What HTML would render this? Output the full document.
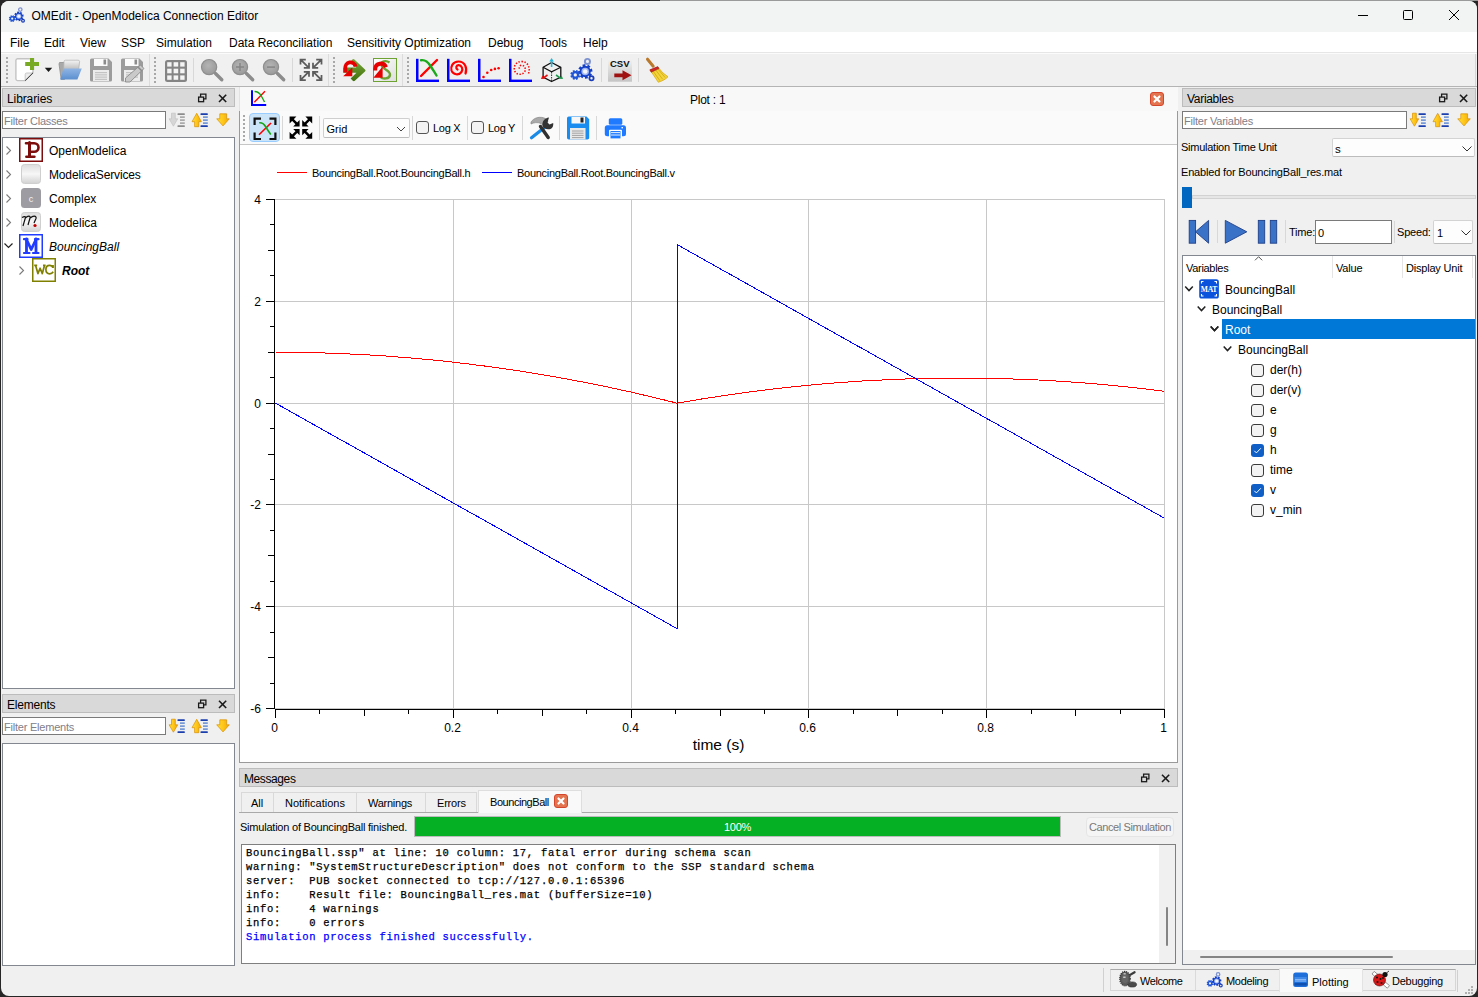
<!DOCTYPE html>
<html><head><meta charset="utf-8">
<style>
html,body{margin:0;padding:0;width:1478px;height:997px;overflow:hidden;background:#262626;}
body{position:relative;font-family:"Liberation Sans",sans-serif;color:#000;}
.a{position:absolute;}
.t{position:absolute;white-space:nowrap;line-height:1;}
#win{position:absolute;left:1px;top:1px;width:1476px;height:995px;background:#f0f0f0;border-radius:8px;}
svg.i{position:absolute;overflow:visible;}
.dockt{position:absolute;background:#d9d9d9;border:1px solid #bcbcbc;box-sizing:border-box;}
.inp{position:absolute;background:#fff;border:1px solid #7a7a7a;box-sizing:border-box;}
.box{position:absolute;background:#fff;border:1px solid #828790;box-sizing:border-box;}
.vs{position:absolute;width:1px;background:#d8d8d8;}
.hdl{position:absolute;width:2px;background:repeating-linear-gradient(to bottom,#a8a8a8 0 2px,transparent 2px 4px);}
.ph{color:#80808a;}
.cb{position:absolute;width:13px;height:13px;box-sizing:border-box;border:1px solid #3a3a3a;border-radius:3px;background:#f3f3f3;}
.cbk{position:absolute;width:13px;height:13px;box-sizing:border-box;border-radius:3px;background:#0f5fc6;}
.mono{font-family:"Liberation Mono",monospace;font-size:10.5px;letter-spacing:0.72px;white-space:pre;-webkit-text-stroke:0.25px;}
</style></head>
<body>
<div class="a" style="left:660px;top:0;width:818px;height:1px;background:#9a9a9a;"></div>
<div id="win"></div>
<svg width="0" height="0" style="position:absolute"><defs><linearGradient id="ggold" x1="0" y1="0" x2="1" y2="0"><stop offset="0" stop-color="#ffe23a"/><stop offset="0.5" stop-color="#ffc61a"/><stop offset="1" stop-color="#f2a900"/></linearGradient></defs></svg>
<!-- ============ TITLE BAR ============ -->
<div class="a" style="left:1px;top:1px;width:1476px;height:31px;background:#f2f3f3;border-radius:8px 8px 0 0;"></div>
<svg class="i" style="left:0;top:0" width="40" height="32">
<path d="M22.43 17.04 L22.26 17.60 L23.36 18.10 L22.18 19.84 L21.25 19.07 L20.84 19.38 L20.33 19.67 L20.75 20.80 L18.69 21.20 L18.57 19.99 L18.06 19.93 L17.50 19.76 L17.00 20.86 L15.26 19.68 L16.03 18.75 L15.72 18.34 L15.43 17.83 L14.30 18.25 L13.90 16.19 L15.11 16.07 L15.17 15.56 L15.34 15.00 L14.24 14.50 L15.42 12.76 L16.35 13.53 L16.76 13.22 L17.27 12.93 L16.85 11.80 L18.91 11.40 L19.03 12.61 L19.54 12.67 L20.10 12.84 L20.60 11.74 L22.34 12.92 L21.57 13.85 L21.88 14.26 L22.17 14.77 L23.30 14.35 L23.70 16.41 L22.49 16.53Z" fill="#1440c8"/>
<circle cx="18.80" cy="16.30" r="2.50" fill="#9fb6f0"/>
<circle cx="18.80" cy="16.30" r="1.50" fill="#f4f6fb"/>
<path d="M14.80 18.60 L14.77 19.01 L15.55 19.20 L14.99 20.54 L14.27 20.17 L14.04 20.44 L13.72 20.71 L14.14 21.39 L12.80 21.95 L12.56 21.18 L12.20 21.20 L11.79 21.17 L11.60 21.95 L10.26 21.39 L10.63 20.67 L10.36 20.44 L10.09 20.12 L9.41 20.54 L8.85 19.20 L9.62 18.96 L9.60 18.60 L9.63 18.19 L8.85 18.00 L9.41 16.66 L10.13 17.03 L10.36 16.76 L10.68 16.49 L10.26 15.81 L11.60 15.25 L11.84 16.02 L12.20 16.00 L12.61 16.03 L12.80 15.25 L14.14 15.81 L13.77 16.53 L14.04 16.76 L14.31 17.08 L14.99 16.66 L15.55 18.00 L14.78 18.24Z M13.30 18.60 A1.1 1.1 0 1 0 11.10 18.60 A1.1 1.1 0 1 0 13.30 18.60Z" fill="#1f55d6" fill-rule="evenodd"/>
<circle cx="20.30" cy="9.60" r="1.70" fill="none" stroke="#7d92cf" stroke-width="1.30"/>
<circle cx="23.00" cy="20.80" r="1.40" fill="none" stroke="#1c3fb8" stroke-width="1.20"/>
</svg>

<div class="t" style="left:31.5px;top:10px;font-size:12px;">OMEdit - OpenModelica Connection Editor</div>
<svg class="i" style="left:0;top:0" width="1478" height="32">
 <g stroke="#000" stroke-width="1" fill="none">
  <line x1="1358" y1="15.5" x2="1368" y2="15.5"/>
  <rect x="1403.5" y="10.5" width="9" height="9" rx="1"/>
  <line x1="1449" y1="10" x2="1459" y2="20"/><line x1="1459" y1="10" x2="1449" y2="20"/>
 </g>
</svg>
<!-- ============ MENU BAR ============ -->
<div class="a" style="left:1px;top:32px;width:1476px;height:20px;background:#fff;"></div>
<div class="a" style="left:1px;top:52px;width:1476px;height:1px;background:#e6e6e6;"></div>
<div class="a" style="left:1px;top:53px;width:1476px;height:1px;background:#fbfbfb;"></div>
<div class="t" style="left:10px;top:37px;font-size:12px;">File</div>
<div class="t" style="left:44px;top:37px;font-size:12px;">Edit</div>
<div class="t" style="left:80px;top:37px;font-size:12px;">View</div>
<div class="t" style="left:121px;top:37px;font-size:12px;">SSP</div>
<div class="t" style="left:156px;top:37px;font-size:12px;">Simulation</div>
<div class="t" style="left:229px;top:37px;font-size:12px;">Data Reconciliation</div>
<div class="t" style="left:347px;top:37px;font-size:12px;">Sensitivity Optimization</div>
<div class="t" style="left:488px;top:37px;font-size:12px;">Debug</div>
<div class="t" style="left:539px;top:37px;font-size:12px;">Tools</div>
<div class="t" style="left:583px;top:37px;font-size:12px;">Help</div>
<!-- ============ TOOLBAR ============ -->
<div class="a" style="left:1px;top:86px;width:1476px;height:1px;background:#b4b4b4;"></div>
<div class="hdl" style="left:6px;top:57px;height:27px;"></div>
<div class="vs" style="left:149px;top:54px;height:32px;background:#dcdcdc;"></div>
<div class="hdl" style="left:154px;top:57px;height:27px;"></div>
<div class="vs" style="left:193px;top:58px;height:24px;"></div>
<div class="vs" style="left:292px;top:58px;height:24px;"></div>
<div class="vs" style="left:328px;top:54px;height:32px;background:#dcdcdc;"></div>
<div class="hdl" style="left:333px;top:57px;height:27px;"></div>
<div class="vs" style="left:402px;top:54px;height:32px;background:#dcdcdc;"></div>
<div class="vs" style="left:1475px;top:54px;height:32px;background:#d6d6d6;"></div>
<div class="hdl" style="left:407px;top:57px;height:27px;"></div>
<div class="vs" style="left:601px;top:58px;height:24px;"></div>
<div class="vs" style="left:638px;top:58px;height:24px;"></div>
<svg class="i" style="left:0;top:0" width="700" height="90">
<defs>
 <linearGradient id="gfold" x1="0" y1="0" x2="1" y2="1"><stop offset="0" stop-color="#e8e8e8"/><stop offset="1" stop-color="#fafafa"/></linearGradient>
 <linearGradient id="gpaper" x1="0" y1="0" x2="0" y2="1"><stop offset="0" stop-color="#f4f4f4"/><stop offset="1" stop-color="#b9b9b9"/></linearGradient>
 <linearGradient id="gblue" x1="0" y1="0" x2="0" y2="1"><stop offset="0" stop-color="#8fb4e3"/><stop offset="1" stop-color="#5b8fd0"/></linearGradient>
 <radialGradient id="glens" cx="0.45" cy="0.4" r="0.6"><stop offset="0" stop-color="#b4b4b4"/><stop offset="1" stop-color="#9a9a9a"/></radialGradient>
 <linearGradient id="ggreen" x1="0" y1="0" x2="0" y2="1"><stop offset="0" stop-color="#7aa83a"/><stop offset="1" stop-color="#3f6f0c"/></linearGradient>
 <linearGradient id="gcsv" x1="0" y1="0" x2="0" y2="1"><stop offset="0" stop-color="#f2f2f2"/><stop offset="1" stop-color="#c4c4c4"/></linearGradient>
 <linearGradient id="gsset" x1="0" y1="0" x2="1" y2="1"><stop offset="0" stop-color="#ffffff"/><stop offset="1" stop-color="#dedede"/></linearGradient>
</defs>
<!-- New -->
<path d="M17.5 58.7H33V72.8L25.2 80.6H17.5A1.8 1.8 0 0 1 15.9 79V60.3A1.8 1.8 0 0 1 17.5 58.7Z" fill="#fff" stroke="#c3c3c3" stroke-width="1.4"/>
<path d="M25.2 80.6V74.5A1.5 1.5 0 0 1 26.7 73H33Z" fill="url(#gfold)" stroke="#c8c8c8" stroke-width="1"/>
<path d="M25.2 80.6L33 72.8" stroke="#333" stroke-width="1"/>
<path d="M30 58H34.1V62.1H39V65.9H34.1V70H30V65.9H25.2V62.1H30Z" fill="#79aa24"/>
<path d="M44.8 67.8H52.2L48.5 72Z" fill="#1a1a1a"/>
<!-- Open -->
<path d="M59.5 62.5H64.5V79.5H61.2L59 64Z" fill="#a9a9a9" stroke="#8f8f8f" stroke-width="0.8"/>
<path d="M64 61.5A1.5 1.5 0 0 1 65.5 60.2H78.2A1.5 1.5 0 0 1 79.6 61.6L78.6 70H63.6Z" fill="url(#gpaper)" stroke="#b0b0b0" stroke-width="0.7"/>
<path d="M63.4 68.6H81.8L77.4 79.6H60.2Z" fill="url(#gblue)"/>
<!-- Save -->
<g transform="translate(90 58.5)">
 <path d="M1.5 0H18.5L22 3.5V21.5A1.5 1.5 0 0 1 20.5 23H1.5A1.5 1.5 0 0 1 0 21.5V1.5A1.5 1.5 0 0 1 1.5 0Z" fill="#9c9c9c"/>
 <rect x="4" y="0.5" width="13.5" height="7" fill="#fbfbfb"/><rect x="13.5" y="1" width="2.6" height="5" fill="#8c8c8c"/>
 <rect x="3" y="11.5" width="16" height="11" fill="#ececec"/>
 <g stroke="#b4b4b4" stroke-width="0.9"><line x1="5" y1="14.2" x2="17" y2="14.2"/><line x1="5" y1="16.4" x2="17" y2="16.4"/><line x1="5" y1="18.6" x2="17" y2="18.6"/><line x1="5" y1="20.8" x2="17" y2="20.8"/></g>
</g>
<!-- Save as -->
<g transform="translate(121 58.5)">
 <path d="M1.5 0H18.5L22 3.5V21.5A1.5 1.5 0 0 1 20.5 23H1.5A1.5 1.5 0 0 1 0 21.5V1.5A1.5 1.5 0 0 1 1.5 0Z" fill="#9c9c9c"/>
 <rect x="4" y="0.5" width="13.5" height="7" fill="#fbfbfb"/><rect x="13.5" y="1" width="2.6" height="5" fill="#8c8c8c"/>
 <rect x="3" y="11.5" width="16" height="11" fill="#ececec"/>
 <g stroke="#b4b4b4" stroke-width="0.9"><line x1="5" y1="14.2" x2="17" y2="14.2"/><line x1="5" y1="16.4" x2="17" y2="16.4"/><line x1="5" y1="18.6" x2="17" y2="18.6"/></g>
 <path d="M19.5 6.5L23 10L9 23.5H4.5V19.5Z" fill="#c9c9c9" stroke="#8a8a8a" stroke-width="0.9"/>
 <path d="M17.2 8.8L20.7 12.3" stroke="#8a8a8a" stroke-width="1.6"/>
</g>
<!-- Grid -->
<rect x="165" y="60" width="22" height="22" rx="2.5" fill="#858585"/>
<g fill="#f4f4f4">
 <rect x="167.2" y="62.2" width="4.4" height="4.4"/><rect x="173.6" y="62.2" width="4.6" height="4.4"/><rect x="180.2" y="62.2" width="4.4" height="4.4"/>
 <rect x="167.2" y="68.7" width="4.4" height="4.6"/><rect x="173.6" y="68.7" width="4.6" height="4.6"/><rect x="180.2" y="68.7" width="4.4" height="4.6"/>
 <rect x="167.2" y="75.4" width="4.4" height="4.4"/><rect x="173.6" y="75.4" width="4.6" height="4.4"/><rect x="180.2" y="75.4" width="4.4" height="4.4"/>
</g>
<!-- Zoom x3 -->
<g stroke-linecap="round">
 <line x1="215.5" y1="73.5" x2="221.8" y2="79.8" stroke="#8c8c8c" stroke-width="3.4"/>
 <circle cx="209.1" cy="67.1" r="7.6" fill="url(#glens)" stroke="#8e8e8e" stroke-width="1.2"/>
 <line x1="246.4" y1="73.5" x2="252.7" y2="79.8" stroke="#8c8c8c" stroke-width="3.4"/>
 <circle cx="240" cy="67.1" r="7.6" fill="url(#glens)" stroke="#8e8e8e" stroke-width="1.2"/>
 <path d="M236 67.1H244M240 63.1V71.1" stroke="#858585" stroke-width="1.5" stroke-linecap="butt"/>
 <line x1="277.4" y1="73.5" x2="283.7" y2="79.8" stroke="#8c8c8c" stroke-width="3.4"/>
 <circle cx="271" cy="67.1" r="7.6" fill="url(#glens)" stroke="#8e8e8e" stroke-width="1.2"/>
 <path d="M267 67.1H275" stroke="#858585" stroke-width="1.5" stroke-linecap="butt"/>
</g>
<!-- Fit -->
<path d="M301.40 60.40L308.20 67.20M305.80 59.50L300.50 59.50L300.50 64.60M303.80 67.80L309.00 67.80L309.00 62.80 M301.40 79.20L308.20 72.40M305.80 80.10L300.50 80.10L300.50 75.00M303.80 71.80L309.00 71.80L309.00 76.80 M320.60 60.40L313.80 67.20M316.20 59.50L321.50 59.50L321.50 64.60M318.20 67.80L313.00 67.80L313.00 62.80 M320.60 79.20L313.80 72.40M316.20 80.10L321.50 80.10L321.50 75.00M318.20 71.80L313.00 71.80L313.00 76.80" fill="none" stroke="#5c5c5c" stroke-width="1.75" stroke-linejoin="miter"/>
<!-- Simulate -->
<path d="M352.4 59.6A1.4 1.4 0 0 1 354.4 59.6L365 69.4A1.5 1.5 0 0 1 365 71.6L354.8 80.8A1.5 1.5 0 0 1 352.8 80.8L350.6 78.6L356.4 72.8H343.2V67.4H356.4L350.6 61.8Z" fill="url(#ggreen)"/>
<path d="M355.6 66.6A5 5 0 0 0 345.4 68.4V72.5" fill="none" stroke="#e60000" stroke-width="3.8"/>
<path d="M343.2 76.3H352.3V67.4Z" fill="#e60000"/>
<!-- Sim setup -->
<rect x="373.5" y="58.5" width="23" height="23" fill="url(#gsset)" stroke="#6ea232" stroke-width="1"/>
<path d="M389.5 62.5C386 60 380.5 61 381.5 65.5C382.5 69.5 390.5 70 390 75C389.5 79 383 79.5 380.5 77" fill="none" stroke="#6ea232" stroke-width="2.4"/>
<path d="M386 67.2A5.6 5.6 0 0 0 375.2 69V70.5" fill="none" stroke="#e60000" stroke-width="4"/>
<path d="M382.6 66.5V77.8H373.4Z" fill="#e60000"/>
<!-- Plot icons -->
<g fill="#0000ff">
 <rect x="416" y="58.8" width="2.5" height="23.2"/><rect x="416" y="79.6" width="23" height="2.4"/>
 <rect x="447" y="58.8" width="2.5" height="23.2"/><rect x="447" y="79.6" width="23" height="2.4"/>
 <rect x="478" y="58.8" width="2.5" height="23.2"/><rect x="478" y="79.6" width="23" height="2.4"/>
 <rect x="509" y="58.8" width="2.5" height="23.2"/><rect x="509" y="79.6" width="23" height="2.4"/>
</g>
<line x1="421" y1="76" x2="437" y2="60" stroke="#ff0000" stroke-width="2.4" stroke-linecap="round"/>
<path d="M421 60.2C425 59.5 428 62 430.5 66C433 70 435 73 436.5 75.5" fill="none" stroke="#1aa91a" stroke-width="2.4" stroke-linecap="round"/>
<path d="M465.5 73.5C467.5 68 465 61.5 458.5 61.5C452.5 61.5 450.5 67 451.5 70.5C453 75 459 75.5 461.5 72C463.5 69 461.5 65 458.5 65.2C456 65.5 455.5 68.5 457.5 69.5" fill="none" stroke="#ff0000" stroke-width="2.2" stroke-linecap="round"/>
<g fill="#ff0000"><circle cx="483.5" cy="77" r="1.3"/><circle cx="487.3" cy="72.7" r="1.3"/><circle cx="491.2" cy="70" r="1.3"/><circle cx="494.9" cy="68.9" r="1.3"/><circle cx="498.6" cy="68.3" r="1.3"/></g>
<path d="M528.5 73.5C530.5 68 528 61.5 521.5 61.5C515.5 61.5 513.5 67 514.5 70.5C516 75 522 75.5 524.5 72C526.5 69 524.5 65 521.5 65.2C519 65.5 518.5 68.5 520.5 69.5" fill="none" stroke="#ff0000" stroke-width="1.6" stroke-dasharray="1.4 1.6"/>
<!-- 3D cube -->
<path d="M551.6 62.5L560.8 67.3V77.2L551.6 81.5L543.1 77.2V67.3Z" fill="none" stroke="#111" stroke-width="1.3" stroke-linejoin="round"/>
<path d="M543.1 67.3L551.6 71.8L560.8 67.3" fill="none" stroke="#111" stroke-width="1.2"/>
<line x1="551.6" y1="72" x2="551.6" y2="81" stroke="#333" stroke-width="1" stroke-dasharray="1.5 1"/>
<path d="M551.6 67V60.5" stroke="#27b5d8" stroke-width="1.6"/><path d="M549.3 61.5L551.6 58L553.9 61.5Z" fill="#27b5d8"/>
<path d="M547.5 75L543.5 77.8" stroke="#e01010" stroke-width="1.6"/><path d="M541 79L542.3 75.5L545 78.8Z" fill="#e01010"/>
<path d="M556 75L560 77.8" stroke="#1a9a4a" stroke-width="1.6"/><path d="M563 79L561.7 75.5L559 78.8Z" fill="#1a9a4a"/>
<!-- gears -->
<g id="gears">
<path d="M590.64 72.55 L590.40 73.40 L592.03 74.15 L590.27 76.77 L588.87 75.61 L588.27 76.08 L587.50 76.50 L588.12 78.19 L585.03 78.80 L584.85 76.99 L584.10 76.89 L583.25 76.65 L582.50 78.28 L579.88 76.52 L581.04 75.12 L580.57 74.52 L580.15 73.75 L578.46 74.37 L577.85 71.28 L579.66 71.10 L579.76 70.35 L580.00 69.50 L578.37 68.75 L580.13 66.13 L581.53 67.29 L582.13 66.82 L582.90 66.40 L582.28 64.71 L585.37 64.10 L585.55 65.91 L586.30 66.01 L587.15 66.25 L587.90 64.62 L590.52 66.38 L589.36 67.78 L589.83 68.38 L590.25 69.15 L591.94 68.53 L592.55 71.62 L590.74 71.80Z" fill="#1440c8"/>
<circle cx="585.20" cy="71.45" r="3.75" fill="#9fb6f0"/>
<circle cx="585.20" cy="71.45" r="2.25" fill="#f4f6fb"/>
<path d="M579.20 74.90 L579.15 75.52 L580.32 75.80 L579.48 77.82 L578.41 77.25 L578.06 77.66 L577.59 78.06 L578.22 79.08 L576.20 79.92 L575.83 78.76 L575.30 78.80 L574.68 78.75 L574.40 79.92 L572.38 79.08 L572.95 78.01 L572.54 77.66 L572.14 77.19 L571.12 77.82 L570.28 75.80 L571.44 75.43 L571.40 74.90 L571.45 74.28 L570.28 74.00 L571.12 71.98 L572.19 72.55 L572.54 72.14 L573.01 71.74 L572.38 70.72 L574.40 69.88 L574.77 71.04 L575.30 71.00 L575.92 71.05 L576.20 69.88 L578.22 70.72 L577.65 71.79 L578.06 72.14 L578.46 72.61 L579.48 71.98 L580.32 74.00 L579.16 74.37Z M576.95 74.90 A1.6500000000000001 1.6500000000000001 0 1 0 573.65 74.90 A1.6500000000000001 1.6500000000000001 0 1 0 576.95 74.90Z" fill="#1f55d6" fill-rule="evenodd"/>
<circle cx="587.45" cy="61.40" r="2.55" fill="none" stroke="#7d92cf" stroke-width="1.95"/>
<circle cx="591.50" cy="78.20" r="2.10" fill="none" stroke="#1c3fb8" stroke-width="1.80"/>
</g>
<!-- CSV -->
<rect x="608" y="58.7" width="24" height="23" fill="url(#gcsv)"/>
<text x="619.8" y="67" text-anchor="middle" font-family="Liberation Sans" font-weight="bold" font-size="9.6" fill="#111">CSV</text>
<path d="M614.3 73.4H622.5V70.2L631.5 75.3L622.5 80.3V77.2H614.3Z" fill="#a01212"/>
<!-- Broom -->
<path d="M647.5 59.2L653.2 66.2" stroke="#b9782a" stroke-width="3" stroke-linecap="round"/>
<path d="M650.2 70.2L656.4 79.4L658.2 82.2C661.5 81.4 665.5 79.4 668 76.8L662.8 72.8L658.2 67.4Z" fill="#f3d43a" stroke="#d9ab12" stroke-width="0.8" stroke-linejoin="round"/>
<path d="M653.2 71.2L659.8 80.6M655.6 69.8L662.6 79.2M657.6 68.6L665.2 77.6" stroke="#caa010" stroke-width="0.7"/>
<path d="M649.8 69.8L657.8 66.6L659 68.6L651.2 72.2Z" fill="#d42525" stroke="#8a1010" stroke-width="0.5"/>
</svg>


<!-- ============ LIBRARIES DOCK ============ -->
<div class="dockt" style="left:2px;top:88px;width:233px;height:19px;"></div>
<div class="t" style="left:7px;top:93px;font-size:12px;letter-spacing:-0.1px;">Libraries</div>
<svg class="i" style="left:198px;top:94px" width="32" height="10"><g fill="none" stroke="#1a1a1a" stroke-width="1.3">
<rect x="0.6" y="3.1" width="5" height="4.6"/><path d="M2.6 3.1V0.1H7.9V4.9H5.6"/></g>
<g stroke="#1a1a1a" stroke-width="1.6"><line x1="21" y1="0.8" x2="28.2" y2="8"/><line x1="28.2" y1="0.8" x2="21" y2="8"/></g></svg>
<div class="inp" style="left:2px;top:111px;width:164px;height:18px;"></div>
<div class="t ph" style="left:4px;top:116px;font-size:11px;letter-spacing:-0.22px;">Filter Classes</div>
<svg class="i" style="left:0;top:0" width="1478" height="997"><g transform="translate(0 0)">
<path d="M171.5 113.2H175.3V118.8H177.7L173.4 126.2L169.1 118.8H171.5Z" fill="#d6d6d6" stroke="#bdbdbd" stroke-width="0.6"/><rect x="177.5" y="113.3" width="7.3" height="1.8" rx="0.5" fill="#8c8c8c"/><rect x="180.0" y="116.4" width="4.8" height="1.4" fill="#9a9a9a"/><rect x="180.0" y="119.4" width="4.8" height="1.4" fill="#9a9a9a"/><rect x="180.0" y="122.4" width="4.8" height="1.4" fill="#9a9a9a"/><rect x="177.5" y="125.2" width="7.3" height="1.8" rx="0.5" fill="#8c8c8c"/>
<path d="M194.6 126.7V121.7H192L196.7 113.3L201.4 121.7H198.8V126.7Z" fill="url(#ggold)" stroke="#d98e00" stroke-width="0.7"/><rect x="200.5" y="113.3" width="7.3" height="1.8" rx="0.5" fill="#1c3fae"/><rect x="203.0" y="116.4" width="4.8" height="1.4" fill="#5a86d0"/><rect x="203.0" y="119.4" width="4.8" height="1.4" fill="#5a86d0"/><rect x="203.0" y="122.4" width="4.8" height="1.4" fill="#5a86d0"/><rect x="200.5" y="125.2" width="7.3" height="1.8" rx="0.5" fill="#1c3fae"/>
<path d="M219.8 113.8H226.6V118.8H229.3L223 125.9L216.7 118.8H219.8Z" fill="url(#ggold)" stroke="#d98e00" stroke-width="0.7"/>
</g></svg>
<div class="box" style="left:2px;top:137px;width:233px;height:552px;"></div>
<svg class="i" style="left:0;top:136px" width="80" height="150">
 <g fill="none" stroke="#7a7a7a" stroke-width="1.1">
  <path d="M6.5 10.5L10.5 14.5L6.5 18.5"/>
  <path d="M6.5 34.5L10.5 38.5L6.5 42.5"/>
  <path d="M6.5 58.5L10.5 62.5L6.5 66.5"/>
  <path d="M6.5 82.5L10.5 86.5L6.5 90.5"/>
  <path d="M19.5 130.5L23.5 134.5L19.5 138.5"/>
 </g>
 <path d="M4.5 107.5L8.5 111.5L12.5 107.5" fill="none" stroke="#222" stroke-width="1.2"/>
 <!-- P icon -->
 <rect x="19.75" y="2.75" width="22.5" height="22.5" fill="#fff" stroke="#7d0d0d" stroke-width="1.5"/>
 <g fill="none" stroke="#7d0d0d" stroke-linecap="round"><path d="M29.5 6.5V20.5" stroke-width="3"/><path d="M26 7.2H34.2A4.3 4.3 0 0 1 34.2 15.8H29.5" stroke-width="2.6"/><path d="M26.3 20.7H34.5" stroke-width="2.4"/></g>
 <!-- ModelicaServices -->
 <defs><linearGradient id="gsv" x1="0" y1="0" x2="0" y2="1"><stop offset="0" stop-color="#dcdcdc"/><stop offset="0.5" stop-color="#f7f7f7"/><stop offset="1" stop-color="#d2d2d2"/></linearGradient></defs>
 <rect x="21.5" y="28.5" width="19" height="19" rx="3" fill="url(#gsv)" stroke="#cfcfcf"/>
 <!-- Complex -->
 <rect x="21" y="52" width="20" height="20" rx="3.5" fill="#9d9ca2"/>
 <text x="31" y="65.5" text-anchor="middle" font-family="Liberation Sans" font-size="9" fill="#f4f4f4">c</text>
 <!-- Modelica -->
 <rect x="21.5" y="76.5" width="19" height="19" rx="3" fill="url(#gsv)" stroke="#cfcfcf"/>
 <path d="M22 81.5C24 80.5 25.5 80 25.5 81.5L23 90M25.5 82C27.5 79.5 31 79.5 30 82L28 89M30.5 82C32.5 79.5 37 79.5 36 82.5L34 87" fill="none" stroke="#111" stroke-width="1.2"/>
 <circle cx="35" cy="89.5" r="1.6" fill="#c00000"/>
 <!-- M icon -->
 <rect x="19.75" y="98.75" width="22.5" height="22.5" fill="#fff" stroke="#1f3cff" stroke-width="1.5"/>
 <g fill="none" stroke="#1f3cff" stroke-linecap="round"><path d="M26.5 103V116.5M36 103V116.5" stroke-width="2.8"/><path d="M26.5 103.5L31.2 113.5L36 103.5" stroke-width="2.8" stroke-linejoin="round"/><path d="M24 103.2H27.5M35 103.2H38.5M24 117H29.5M33 117H38.5" stroke-width="2.2"/></g>
 <!-- WC icon -->
 <rect x="32.75" y="122.75" width="22.5" height="22.5" fill="#fff" stroke="#808000" stroke-width="1.5"/>
 <g fill="none" stroke="#808000" stroke-width="1.7" stroke-linejoin="round"><path d="M35.6 129.6L37.9 137.6L40.1 132.2L42.3 137.6L44.5 129.6"/><path d="M34.2 129.4H37.2M43 129.4H45.6"/><path d="M53 131.6C52.4 130 51.2 129.4 49.6 129.4C47.2 129.4 45.9 131.4 45.9 133.6C45.9 136 47.3 137.8 49.7 137.8C51.3 137.8 52.5 137 53.2 135.8"/><path d="M53 129V132"/></g>
</svg>
<div class="t" style="left:49px;top:145px;font-size:12px;">OpenModelica</div>
<div class="t" style="left:49px;top:169px;font-size:12px;letter-spacing:-0.15px;">ModelicaServices</div>
<div class="t" style="left:49px;top:193px;font-size:12px;">Complex</div>
<div class="t" style="left:49px;top:217px;font-size:12px;">Modelica</div>
<div class="t" style="left:49px;top:241px;font-size:12px;font-style:italic;">BouncingBall</div>
<div class="t" style="left:62px;top:265px;font-size:12px;font-style:italic;font-weight:bold;">Root</div>


<!-- ============ ELEMENTS DOCK ============ -->
<div class="dockt" style="left:2px;top:694px;width:233px;height:19px;"></div>
<div class="t" style="left:7px;top:699px;font-size:12px;letter-spacing:-0.2px;">Elements</div>
<svg class="i" style="left:198px;top:700px" width="32" height="10"><g fill="none" stroke="#1a1a1a" stroke-width="1.3">
<rect x="0.6" y="3.1" width="5" height="4.6"/><path d="M2.6 3.1V0.1H7.9V4.9H5.6"/></g>
<g stroke="#1a1a1a" stroke-width="1.6"><line x1="21" y1="0.8" x2="28.2" y2="8"/><line x1="28.2" y1="0.8" x2="21" y2="8"/></g></svg>
<div class="inp" style="left:2px;top:717px;width:164px;height:18px;"></div>
<div class="t ph" style="left:4px;top:722px;font-size:11px;letter-spacing:-0.22px;">Filter Elements</div>
<svg class="i" style="left:0;top:0" width="1478" height="997"><g transform="translate(0 606)">
<path d="M171.5 113.2H175.3V118.8H177.7L173.4 126.2L169.1 118.8H171.5Z" fill="url(#ggold)" stroke="#d98e00" stroke-width="0.7"/><rect x="177.5" y="113.3" width="7.3" height="1.8" rx="0.5" fill="#1c3fae"/><rect x="180.0" y="116.4" width="4.8" height="1.4" fill="#5a86d0"/><rect x="180.0" y="119.4" width="4.8" height="1.4" fill="#5a86d0"/><rect x="180.0" y="122.4" width="4.8" height="1.4" fill="#5a86d0"/><rect x="177.5" y="125.2" width="7.3" height="1.8" rx="0.5" fill="#1c3fae"/>
<path d="M194.6 126.7V121.7H192L196.7 113.3L201.4 121.7H198.8V126.7Z" fill="url(#ggold)" stroke="#d98e00" stroke-width="0.7"/><rect x="200.5" y="113.3" width="7.3" height="1.8" rx="0.5" fill="#1c3fae"/><rect x="203.0" y="116.4" width="4.8" height="1.4" fill="#5a86d0"/><rect x="203.0" y="119.4" width="4.8" height="1.4" fill="#5a86d0"/><rect x="203.0" y="122.4" width="4.8" height="1.4" fill="#5a86d0"/><rect x="200.5" y="125.2" width="7.3" height="1.8" rx="0.5" fill="#1c3fae"/>
<path d="M219.8 113.8H226.6V118.8H229.3L223 125.9L216.7 118.8H219.8Z" fill="url(#ggold)" stroke="#d98e00" stroke-width="0.7"/>
</g></svg>
<div class="box" style="left:2px;top:743px;width:233px;height:223px;"></div>

<!-- ============ PLOT WINDOW ============ -->
<div class="a" style="left:239px;top:87px;width:939px;height:24px;background:#f8f8f8;"></div>
<div class="a" style="left:239px;top:87px;width:1px;height:24px;background:#e2e2e2;"></div>
<svg class="i" style="left:0;top:0" width="300" height="150">
 <path d="M252 90.3V105H266.2" fill="none" stroke="#0000ff" stroke-width="2"/>
 <line x1="254.3" y1="102.2" x2="265" y2="91.3" stroke="#ff0000" stroke-width="1.4"/>
 <path d="M254.5 91.5C257.5 91.5 259.5 93 261 95.5C262.5 98 263.5 100 264.5 102" fill="none" stroke="#16a516" stroke-width="1.4"/>
</svg>

<div class="t" style="left:690px;top:94px;font-size:12px;letter-spacing:-0.25px;">Plot : 1</div>
<div class="a" style="left:1150px;top:92px;width:14px;height:14px;box-sizing:border-box;border:1px solid #d4462c;border-radius:3px;background:#e3744f;"></div>
<svg class="i" style="left:1150px;top:92px" width="14" height="14"><g stroke="#fff" stroke-width="2.2" stroke-linecap="round"><line x1="4.5" y1="4.5" x2="9.5" y2="9.5"/><line x1="9.5" y1="4.5" x2="4.5" y2="9.5"/></g></svg>
<div class="a" style="left:239px;top:111px;width:939px;height:652px;background:#fff;border:1px solid #9a9a9a;border-top:none;box-sizing:border-box;"></div>
<div class="a" style="left:240px;top:111px;width:937px;height:33px;background:#fafafa;"></div>
<div class="a" style="left:240px;top:144px;width:937px;height:1px;background:#c6c6c6;"></div>
<div class="hdl" style="left:243px;top:115px;height:27px;"></div>
<div class="a" style="left:249px;top:113px;width:31px;height:29px;box-sizing:border-box;background:#cce4f7;border:1px solid #99ccff;border-radius:4px;"></div>
<div class="vs" style="left:282px;top:116px;height:24px;"></div>
<div class="vs" style="left:319px;top:116px;height:24px;"></div>
<div class="a" style="left:323px;top:118px;width:87px;height:20px;box-sizing:border-box;background:#fdfdfd;border:1px solid #cfcfcf;border-bottom-color:#bdbdbd;border-radius:2px;"></div>
<div class="t" style="left:326.5px;top:124px;font-size:11px;">Grid</div>
<div class="vs" style="left:412px;top:116px;height:24px;"></div>
<div class="cb" style="left:416px;top:121px;border-color:#555;background:#f3f3f3;"></div>
<div class="t" style="left:433px;top:123px;font-size:11px;letter-spacing:-0.3px;">Log X</div>
<div class="vs" style="left:467px;top:116px;height:24px;"></div>
<div class="cb" style="left:471px;top:121px;border-color:#555;background:#f3f3f3;"></div>
<div class="t" style="left:488px;top:123px;font-size:11px;letter-spacing:-0.3px;">Log Y</div>
<div class="vs" style="left:522px;top:116px;height:24px;"></div>
<div class="vs" style="left:559px;top:116px;height:24px;"></div>
<div class="vs" style="left:596px;top:116px;height:24px;"></div>
<svg class="i" style="left:0;top:0" width="700" height="150">
 <!-- zoom icon brackets -->
 <g fill="none" stroke="#111" stroke-width="2.2">
  <path d="M254.6 125V118.6H261M269.5 118.6H275.4V125M254.6 132.5V139H261M269.5 139H275.4V132.5"/>
 </g>
 <line x1="259" y1="134.8" x2="271" y2="123" stroke="#ff0000" stroke-width="1.6"/>
 <path d="M259.2 122.8C262 122.5 264 124 265.5 126.5C267 129 269 132 270.8 134.5" fill="none" stroke="#16a516" stroke-width="1.6"/>
 <!-- fit icon (double arrows) -->
 <path d="M291.60 118.60 L297.60 124.60 M291.60 136.80 L297.60 130.80 M310.20 118.60 L304.20 124.60 M310.20 136.80 L304.20 130.80" stroke="#000" stroke-width="2.5"/>
 <path d="M289.60 116.60 L296.40 116.60 L289.60 123.40Z M299.60 126.50 L293.20 126.50 L299.60 120.10Z M289.60 138.80 L296.40 138.80 L289.60 132.00Z M299.60 128.90 L293.20 128.90 L299.60 135.30Z M312.20 116.60 L305.40 116.60 L312.20 123.40Z M302.20 126.50 L308.60 126.50 L302.20 120.10Z M312.20 138.80 L305.40 138.80 L312.20 132.00Z M302.20 128.90 L308.60 128.90 L302.20 135.30Z " fill="#000"/>
 <path d="M397 127L401 131L405 127" fill="none" stroke="#444" stroke-width="1"/>
 <!-- tools -->
 <path d="M544.5 127.5L531.5 137.8" stroke="#1a8ae6" stroke-width="3.2" stroke-linecap="round"/>
 <path d="M531 122C534 117.5 540 116 545.5 118.5L548 121L544.5 127L541 123.5C537.5 122 534 122.5 531 124Z" fill="#a9a9a9" stroke="#7a7a7a" stroke-width="0.6"/>
 <path d="M540.5 126.5L548.2 137.5" stroke="#303030" stroke-width="3.4" stroke-linecap="round"/>
 <path d="M549 117.5C544.5 118 542 121.5 542.5 125.5C543 128.5 547 130 550.5 129C553 128 553.5 125 553.2 123L549.5 124.5L547.5 122.5Z" fill="#333"/>
 <!-- save blue -->
 <g transform="translate(567 116.5)">
  <path d="M1.8 0H19.5L22.2 2.8V21.2A1.8 1.8 0 0 1 20.4 23H1.8A1.8 1.8 0 0 1 0 21.2V1.8A1.8 1.8 0 0 1 1.8 0Z" fill="#1a8cf0"/>
  <rect x="4.5" y="0.5" width="13.5" height="6.5" fill="#f7f7f7"/><rect x="13.5" y="1" width="3" height="5" fill="#222"/>
  <rect x="3" y="11.5" width="15.5" height="11.5" fill="#e9e9e9"/>
  <g stroke="#9a9a9a" stroke-width="0.9"><line x1="5" y1="14.5" x2="16.5" y2="14.5"/><line x1="5" y1="16.7" x2="16.5" y2="16.7"/><line x1="5" y1="18.9" x2="16.5" y2="18.9"/><line x1="5" y1="21.1" x2="16.5" y2="21.1"/></g>
 </g>
 <!-- print -->
 <rect x="608.8" y="118.2" width="13.5" height="6.5" rx="1.5" fill="#1f7aff"/>
 <rect x="604.8" y="125.2" width="21.2" height="11" rx="2.5" fill="#1f7aff"/>
 <rect x="609" y="129.8" width="13" height="8.6" rx="1" fill="#fff"/>
 <rect x="610.5" y="131" width="10" height="7.4" fill="#1f7aff"/>
 <g stroke="#fff" stroke-width="0.9"><line x1="611" y1="132.6" x2="620" y2="132.6"/><line x1="611" y1="135" x2="620" y2="135"/></g>
 <rect x="621.5" y="127" width="1.4" height="1.4" fill="#fff"/>
</svg>

<svg class="i" style="left:0;top:0" width="1478" height="997"><g stroke="#c8c8c8" stroke-width="1" shape-rendering="crispEdges"><line x1="453.5" y1="199" x2="453.5" y2="708" /><line x1="631.5" y1="199" x2="631.5" y2="708" /><line x1="808.5" y1="199" x2="808.5" y2="708" /><line x1="986.5" y1="199" x2="986.5" y2="708" /><line x1="1164.5" y1="199" x2="1164.5" y2="708" /><line x1="275" y1="199.5" x2="1165" y2="199.5" /><line x1="275" y1="301.5" x2="1165" y2="301.5" /><line x1="275" y1="403.5" x2="1165" y2="403.5" /><line x1="275" y1="504.5" x2="1165" y2="504.5" /><line x1="275" y1="606.5" x2="1165" y2="606.5" /><line x1="275" y1="708.5" x2="1165" y2="708.5" /></g>
<g stroke="#000" stroke-width="1" shape-rendering="crispEdges"><line x1="274.5" y1="199" x2="274.5" y2="709" /><line x1="275" y1="709.5" x2="1165" y2="709.5" /><line x1="266" y1="199.5" x2="274" y2="199.5" /><line x1="270" y1="224.5" x2="274" y2="224.5" /><line x1="268" y1="250.5" x2="274" y2="250.5" /><line x1="270" y1="275.5" x2="274" y2="275.5" /><line x1="266" y1="301.5" x2="274" y2="301.5" /><line x1="270" y1="326.5" x2="274" y2="326.5" /><line x1="268" y1="352.5" x2="274" y2="352.5" /><line x1="270" y1="377.5" x2="274" y2="377.5" /><line x1="266" y1="403.5" x2="274" y2="403.5" /><line x1="270" y1="428.5" x2="274" y2="428.5" /><line x1="268" y1="454.5" x2="274" y2="454.5" /><line x1="270" y1="479.5" x2="274" y2="479.5" /><line x1="266" y1="504.5" x2="274" y2="504.5" /><line x1="270" y1="530.5" x2="274" y2="530.5" /><line x1="268" y1="555.5" x2="274" y2="555.5" /><line x1="270" y1="581.5" x2="274" y2="581.5" /><line x1="266" y1="606.5" x2="274" y2="606.5" /><line x1="270" y1="632.5" x2="274" y2="632.5" /><line x1="268" y1="657.5" x2="274" y2="657.5" /><line x1="270" y1="683.5" x2="274" y2="683.5" /><line x1="266" y1="708.5" x2="274" y2="708.5" /><line x1="275.5" y1="710" x2="275.5" y2="718" /><line x1="319.5" y1="710" x2="319.5" y2="714" /><line x1="364.5" y1="710" x2="364.5" y2="716" /><line x1="408.5" y1="710" x2="408.5" y2="714" /><line x1="453.5" y1="710" x2="453.5" y2="718" /><line x1="497.5" y1="710" x2="497.5" y2="714" /><line x1="542.5" y1="710" x2="542.5" y2="716" /><line x1="586.5" y1="710" x2="586.5" y2="714" /><line x1="631.5" y1="710" x2="631.5" y2="718" /><line x1="675.5" y1="710" x2="675.5" y2="714" /><line x1="720.5" y1="710" x2="720.5" y2="716" /><line x1="764.5" y1="710" x2="764.5" y2="714" /><line x1="808.5" y1="710" x2="808.5" y2="718" /><line x1="853.5" y1="710" x2="853.5" y2="714" /><line x1="897.5" y1="710" x2="897.5" y2="716" /><line x1="942.5" y1="710" x2="942.5" y2="714" /><line x1="986.5" y1="710" x2="986.5" y2="718" /><line x1="1031.5" y1="710" x2="1031.5" y2="714" /><line x1="1075.5" y1="710" x2="1075.5" y2="716" /><line x1="1120.5" y1="710" x2="1120.5" y2="714" /><line x1="1164.5" y1="710" x2="1164.5" y2="718" /></g>
<polyline fill="none" stroke="#ff0000" stroke-width="1" shape-rendering="crispEdges" points="275.5,352.2 277.3,352.2 279.1,352.2 280.8,352.2 282.6,352.2 284.4,352.2 286.2,352.2 287.9,352.2 289.7,352.3 291.5,352.3 293.3,352.3 295.1,352.3 296.8,352.3 298.6,352.4 300.4,352.4 302.2,352.4 303.9,352.5 305.7,352.5 307.5,352.5 309.3,352.6 311.1,352.6 312.8,352.6 314.6,352.7 316.4,352.7 318.2,352.8 319.9,352.8 321.7,352.9 323.5,352.9 325.3,353.0 327.1,353.0 328.8,353.1 330.6,353.2 332.4,353.2 334.2,353.3 336.0,353.4 337.7,353.4 339.5,353.5 341.3,353.6 343.1,353.6 344.8,353.7 346.6,353.8 348.4,353.9 350.2,354.0 352.0,354.0 353.7,354.1 355.5,354.2 357.3,354.3 359.1,354.4 360.8,354.5 362.6,354.6 364.4,354.7 366.2,354.8 368.0,354.9 369.7,355.0 371.5,355.1 373.3,355.2 375.1,355.3 376.8,355.4 378.6,355.6 380.4,355.7 382.2,355.8 384.0,355.9 385.7,356.0 387.5,356.2 389.3,356.3 391.1,356.4 392.8,356.6 394.6,356.7 396.4,356.8 398.2,357.0 400.0,357.1 401.7,357.2 403.5,357.4 405.3,357.5 407.1,357.7 408.9,357.8 410.6,358.0 412.4,358.1 414.2,358.3 416.0,358.4 417.7,358.6 419.5,358.8 421.3,358.9 423.1,359.1 424.9,359.2 426.6,359.4 428.4,359.6 430.2,359.8 432.0,359.9 433.7,360.1 435.5,360.3 437.3,360.5 439.1,360.7 440.9,360.8 442.6,361.0 444.4,361.2 446.2,361.4 448.0,361.6 449.7,361.8 451.5,362.0 453.3,362.2 455.1,362.4 456.9,362.6 458.6,362.8 460.4,363.0 462.2,363.2 464.0,363.4 465.7,363.6 467.5,363.8 469.3,364.1 471.1,364.3 472.9,364.5 474.6,364.7 476.4,365.0 478.2,365.2 480.0,365.4 481.7,365.6 483.5,365.9 485.3,366.1 487.1,366.3 488.9,366.6 490.6,366.8 492.4,367.1 494.2,367.3 496.0,367.6 497.8,367.8 499.5,368.1 501.3,368.3 503.1,368.6 504.9,368.8 506.6,369.1 508.4,369.3 510.2,369.6 512.0,369.9 513.8,370.1 515.5,370.4 517.3,370.7 519.1,370.9 520.9,371.2 522.6,371.5 524.4,371.8 526.2,372.1 528.0,372.3 529.8,372.6 531.5,372.9 533.3,373.2 535.1,373.5 536.9,373.8 538.6,374.1 540.4,374.4 542.2,374.7 544.0,375.0 545.8,375.3 547.5,375.6 549.3,375.9 551.1,376.2 552.9,376.5 554.6,376.8 556.4,377.1 558.2,377.4 560.0,377.8 561.8,378.1 563.5,378.4 565.3,378.7 567.1,379.1 568.9,379.4 570.6,379.7 572.4,380.1 574.2,380.4 576.0,380.7 577.8,381.1 579.5,381.4 581.3,381.7 583.1,382.1 584.9,382.4 586.7,382.8 588.4,383.1 590.2,383.5 592.0,383.8 593.8,384.2 595.5,384.6 597.3,384.9 599.1,385.3 600.9,385.6 602.7,386.0 604.4,386.4 606.2,386.7 608.0,387.1 609.8,387.5 611.5,387.9 613.3,388.3 615.1,388.6 616.9,389.0 618.7,389.4 620.4,389.8 622.2,390.2 624.0,390.6 625.8,391.0 627.5,391.4 629.3,391.7 631.1,392.1 632.9,392.5 634.7,392.9 636.4,393.4 638.2,393.8 640.0,394.2 641.8,394.6 643.5,395.0 645.3,395.4 647.1,395.8 648.9,396.2 650.7,396.7 652.4,397.1 654.2,397.5 656.0,397.9 657.8,398.4 659.5,398.8 661.3,399.2 663.1,399.7 664.9,400.1 666.7,400.5 668.4,401.0 670.2,401.4 672.0,401.9 673.8,402.3 675.5,402.8 677.3,403.2 677.8,403.1 677.8,403.1 679.1,402.9 680.9,402.5 682.7,402.2 684.4,401.9 686.2,401.6 688.0,401.3 689.8,401.0 691.6,400.7 693.3,400.4 695.1,400.1 696.9,399.8 698.7,399.5 700.4,399.2 702.2,398.9 704.0,398.7 705.8,398.4 707.6,398.1 709.3,397.8 711.1,397.5 712.9,397.2 714.7,397.0 716.4,396.7 718.2,396.4 720.0,396.2 721.8,395.9 723.6,395.6 725.3,395.4 727.1,395.1 728.9,394.8 730.7,394.6 732.4,394.3 734.2,394.1 736.0,393.8 737.8,393.6 739.6,393.3 741.3,393.1 743.1,392.8 744.9,392.6 746.7,392.3 748.4,392.1 750.2,391.9 752.0,391.6 753.8,391.4 755.6,391.2 757.3,390.9 759.1,390.7 760.9,390.5 762.7,390.3 764.5,390.1 766.2,389.8 768.0,389.6 769.8,389.4 771.6,389.2 773.3,389.0 775.1,388.8 776.9,388.6 778.7,388.4 780.5,388.2 782.2,388.0 784.0,387.8 785.8,387.6 787.6,387.4 789.3,387.2 791.1,387.0 792.9,386.8 794.7,386.6 796.5,386.4 798.2,386.3 800.0,386.1 801.8,385.9 803.6,385.7 805.3,385.5 807.1,385.4 808.9,385.2 810.7,385.0 812.5,384.9 814.2,384.7 816.0,384.5 817.8,384.4 819.6,384.2 821.3,384.1 823.1,383.9 824.9,383.8 826.7,383.6 828.5,383.5 830.2,383.3 832.0,383.2 833.8,383.0 835.6,382.9 837.3,382.8 839.1,382.6 840.9,382.5 842.7,382.4 844.5,382.2 846.2,382.1 848.0,382.0 849.8,381.8 851.6,381.7 853.4,381.6 855.1,381.5 856.9,381.4 858.7,381.3 860.5,381.1 862.2,381.0 864.0,380.9 865.8,380.8 867.6,380.7 869.4,380.6 871.1,380.5 872.9,380.4 874.7,380.3 876.5,380.2 878.2,380.1 880.0,380.0 881.8,380.0 883.6,379.9 885.4,379.8 887.1,379.7 888.9,379.6 890.7,379.5 892.5,379.5 894.2,379.4 896.0,379.3 897.8,379.2 899.6,379.2 901.4,379.1 903.1,379.0 904.9,379.0 906.7,378.9 908.5,378.9 910.2,378.8 912.0,378.8 913.8,378.7 915.6,378.7 917.4,378.6 919.1,378.6 920.9,378.5 922.7,378.5 924.5,378.4 926.2,378.4 928.0,378.4 929.8,378.3 931.6,378.3 933.4,378.3 935.1,378.2 936.9,378.2 938.7,378.2 940.5,378.2 942.2,378.1 944.0,378.1 945.8,378.1 947.6,378.1 949.4,378.1 951.1,378.1 952.9,378.1 954.7,378.1 956.5,378.1 958.3,378.1 960.0,378.1 961.8,378.1 963.6,378.1 965.4,378.1 967.1,378.1 968.9,378.1 970.7,378.1 972.5,378.1 974.3,378.1 976.0,378.1 977.8,378.2 979.6,378.2 981.4,378.2 983.1,378.2 984.9,378.3 986.7,378.3 988.5,378.3 990.3,378.4 992.0,378.4 993.8,378.4 995.6,378.5 997.4,378.5 999.1,378.6 1000.9,378.6 1002.7,378.6 1004.5,378.7 1006.3,378.7 1008.0,378.8 1009.8,378.9 1011.6,378.9 1013.4,379.0 1015.1,379.0 1016.9,379.1 1018.7,379.2 1020.5,379.2 1022.3,379.3 1024.0,379.4 1025.8,379.4 1027.6,379.5 1029.4,379.6 1031.2,379.7 1032.9,379.8 1034.7,379.8 1036.5,379.9 1038.3,380.0 1040.0,380.1 1041.8,380.2 1043.6,380.3 1045.4,380.4 1047.2,380.5 1048.9,380.6 1050.7,380.7 1052.5,380.8 1054.3,380.9 1056.0,381.0 1057.8,381.1 1059.6,381.2 1061.4,381.3 1063.2,381.5 1064.9,381.6 1066.7,381.7 1068.5,381.8 1070.3,381.9 1072.0,382.1 1073.8,382.2 1075.6,382.3 1077.4,382.5 1079.2,382.6 1080.9,382.7 1082.7,382.9 1084.5,383.0 1086.3,383.1 1088.0,383.3 1089.8,383.4 1091.6,383.6 1093.4,383.7 1095.2,383.9 1096.9,384.0 1098.7,384.2 1100.5,384.3 1102.3,384.5 1104.0,384.7 1105.8,384.8 1107.6,385.0 1109.4,385.2 1111.2,385.3 1112.9,385.5 1114.7,385.7 1116.5,385.9 1118.3,386.0 1120.1,386.2 1121.8,386.4 1123.6,386.6 1125.4,386.8 1127.2,386.9 1128.9,387.1 1130.7,387.3 1132.5,387.5 1134.3,387.7 1136.1,387.9 1137.8,388.1 1139.6,388.3 1141.4,388.5 1143.2,388.7 1144.9,388.9 1146.7,389.1 1148.5,389.4 1150.3,389.6 1152.1,389.8 1153.8,390.0 1155.6,390.2 1157.4,390.4 1159.2,390.7 1160.9,390.9 1162.7,391.1 1164.5,391.3"/>
<polyline fill="none" stroke="#0000ff" stroke-width="1" shape-rendering="crispEdges" points="275.5,403.1 277.3,404.1 279.1,405.1 280.8,406.1 282.6,407.1 284.4,408.1 286.2,409.1 287.9,410.1 289.7,411.1 291.5,412.1 293.3,413.1 295.1,414.1 296.8,415.1 298.6,416.1 300.4,417.1 302.2,418.1 303.9,419.1 305.7,420.1 307.5,421.1 309.3,422.1 311.1,423.1 312.8,424.1 314.6,425.1 316.4,426.1 318.2,427.1 319.9,428.1 321.7,429.1 323.5,430.1 325.3,431.1 327.1,432.1 328.8,433.1 330.6,434.1 332.4,435.1 334.2,436.1 336.0,437.1 337.7,438.1 339.5,439.1 341.3,440.1 343.1,441.0 344.8,442.0 346.6,443.0 348.4,444.0 350.2,445.0 352.0,446.0 353.7,447.0 355.5,448.0 357.3,449.0 359.1,450.0 360.8,451.0 362.6,452.0 364.4,453.0 366.2,454.0 368.0,455.0 369.7,456.0 371.5,457.0 373.3,458.0 375.1,459.0 376.8,460.0 378.6,461.0 380.4,462.0 382.2,463.0 384.0,464.0 385.7,465.0 387.5,466.0 389.3,467.0 391.1,468.0 392.8,469.0 394.6,470.0 396.4,471.0 398.2,472.0 400.0,473.0 401.7,474.0 403.5,475.0 405.3,476.0 407.1,477.0 408.9,478.0 410.6,479.0 412.4,480.0 414.2,481.0 416.0,482.0 417.7,483.0 419.5,484.0 421.3,485.0 423.1,486.0 424.9,487.0 426.6,488.0 428.4,489.0 430.2,490.0 432.0,491.0 433.7,492.0 435.5,493.0 437.3,494.0 439.1,495.0 440.9,496.0 442.6,497.0 444.4,498.0 446.2,499.0 448.0,500.0 449.7,501.0 451.5,502.0 453.3,503.0 455.1,504.0 456.9,505.0 458.6,506.0 460.4,507.0 462.2,508.0 464.0,509.0 465.7,510.0 467.5,511.0 469.3,512.0 471.1,513.0 472.9,514.0 474.6,514.9 476.4,515.9 478.2,516.9 480.0,517.9 481.7,518.9 483.5,519.9 485.3,520.9 487.1,521.9 488.9,522.9 490.6,523.9 492.4,524.9 494.2,525.9 496.0,526.9 497.8,527.9 499.5,528.9 501.3,529.9 503.1,530.9 504.9,531.9 506.6,532.9 508.4,533.9 510.2,534.9 512.0,535.9 513.8,536.9 515.5,537.9 517.3,538.9 519.1,539.9 520.9,540.9 522.6,541.9 524.4,542.9 526.2,543.9 528.0,544.9 529.8,545.9 531.5,546.9 533.3,547.9 535.1,548.9 536.9,549.9 538.6,550.9 540.4,551.9 542.2,552.9 544.0,553.9 545.8,554.9 547.5,555.9 549.3,556.9 551.1,557.9 552.9,558.9 554.6,559.9 556.4,560.9 558.2,561.9 560.0,562.9 561.8,563.9 563.5,564.9 565.3,565.9 567.1,566.9 568.9,567.9 570.6,568.9 572.4,569.9 574.2,570.9 576.0,571.9 577.8,572.9 579.5,573.9 581.3,574.9 583.1,575.9 584.9,576.9 586.7,577.9 588.4,578.9 590.2,579.9 592.0,580.9 593.8,581.9 595.5,582.9 597.3,583.9 599.1,584.9 600.9,585.9 602.7,586.9 604.4,587.9 606.2,588.9 608.0,589.8 609.8,590.8 611.5,591.8 613.3,592.8 615.1,593.8 616.9,594.8 618.7,595.8 620.4,596.8 622.2,597.8 624.0,598.8 625.8,599.8 627.5,600.8 629.3,601.8 631.1,602.8 632.9,603.8 634.7,604.8 636.4,605.8 638.2,606.8 640.0,607.8 641.8,608.8 643.5,609.8 645.3,610.8 647.1,611.8 648.9,612.8 650.7,613.8 652.4,614.8 654.2,615.8 656.0,616.8 657.8,617.8 659.5,618.8 661.3,619.8 663.1,620.8 664.9,621.8 666.7,622.8 668.4,623.8 670.2,624.8 672.0,625.8 673.8,626.8 675.5,627.8 677.3,628.8 677.8,629.0 677.8,244.9 679.1,245.7 680.9,246.7 682.7,247.7 684.4,248.7 686.2,249.7 688.0,250.7 689.8,251.7 691.6,252.7 693.3,253.7 695.1,254.7 696.9,255.7 698.7,256.7 700.4,257.7 702.2,258.7 704.0,259.7 705.8,260.7 707.6,261.7 709.3,262.7 711.1,263.7 712.9,264.7 714.7,265.7 716.4,266.7 718.2,267.7 720.0,268.7 721.8,269.7 723.6,270.7 725.3,271.7 727.1,272.7 728.9,273.6 730.7,274.6 732.4,275.6 734.2,276.6 736.0,277.6 737.8,278.6 739.6,279.6 741.3,280.6 743.1,281.6 744.9,282.6 746.7,283.6 748.4,284.6 750.2,285.6 752.0,286.6 753.8,287.6 755.6,288.6 757.3,289.6 759.1,290.6 760.9,291.6 762.7,292.6 764.5,293.6 766.2,294.6 768.0,295.6 769.8,296.6 771.6,297.6 773.3,298.6 775.1,299.6 776.9,300.6 778.7,301.6 780.5,302.6 782.2,303.6 784.0,304.6 785.8,305.6 787.6,306.6 789.3,307.6 791.1,308.6 792.9,309.6 794.7,310.6 796.5,311.6 798.2,312.6 800.0,313.6 801.8,314.6 803.6,315.6 805.3,316.6 807.1,317.6 808.9,318.6 810.7,319.6 812.5,320.6 814.2,321.6 816.0,322.6 817.8,323.6 819.6,324.6 821.3,325.6 823.1,326.6 824.9,327.6 826.7,328.6 828.5,329.6 830.2,330.6 832.0,331.6 833.8,332.6 835.6,333.6 837.3,334.6 839.1,335.6 840.9,336.6 842.7,337.6 844.5,338.6 846.2,339.6 848.0,340.6 849.8,341.6 851.6,342.6 853.4,343.6 855.1,344.6 856.9,345.6 858.7,346.6 860.5,347.5 862.2,348.5 864.0,349.5 865.8,350.5 867.6,351.5 869.4,352.5 871.1,353.5 872.9,354.5 874.7,355.5 876.5,356.5 878.2,357.5 880.0,358.5 881.8,359.5 883.6,360.5 885.4,361.5 887.1,362.5 888.9,363.5 890.7,364.5 892.5,365.5 894.2,366.5 896.0,367.5 897.8,368.5 899.6,369.5 901.4,370.5 903.1,371.5 904.9,372.5 906.7,373.5 908.5,374.5 910.2,375.5 912.0,376.5 913.8,377.5 915.6,378.5 917.4,379.5 919.1,380.5 920.9,381.5 922.7,382.5 924.5,383.5 926.2,384.5 928.0,385.5 929.8,386.5 931.6,387.5 933.4,388.5 935.1,389.5 936.9,390.5 938.7,391.5 940.5,392.5 942.2,393.5 944.0,394.5 945.8,395.5 947.6,396.5 949.4,397.5 951.1,398.5 952.9,399.5 954.7,400.5 956.5,401.5 958.3,402.5 960.0,403.5 961.8,404.5 963.6,405.5 965.4,406.5 967.1,407.5 968.9,408.5 970.7,409.5 972.5,410.5 974.3,411.5 976.0,412.5 977.8,413.5 979.6,414.5 981.4,415.5 983.1,416.5 984.9,417.5 986.7,418.5 988.5,419.5 990.3,420.5 992.0,421.5 993.8,422.4 995.6,423.4 997.4,424.4 999.1,425.4 1000.9,426.4 1002.7,427.4 1004.5,428.4 1006.3,429.4 1008.0,430.4 1009.8,431.4 1011.6,432.4 1013.4,433.4 1015.1,434.4 1016.9,435.4 1018.7,436.4 1020.5,437.4 1022.3,438.4 1024.0,439.4 1025.8,440.4 1027.6,441.4 1029.4,442.4 1031.2,443.4 1032.9,444.4 1034.7,445.4 1036.5,446.4 1038.3,447.4 1040.0,448.4 1041.8,449.4 1043.6,450.4 1045.4,451.4 1047.2,452.4 1048.9,453.4 1050.7,454.4 1052.5,455.4 1054.3,456.4 1056.0,457.4 1057.8,458.4 1059.6,459.4 1061.4,460.4 1063.2,461.4 1064.9,462.4 1066.7,463.4 1068.5,464.4 1070.3,465.4 1072.0,466.4 1073.8,467.4 1075.6,468.4 1077.4,469.4 1079.2,470.4 1080.9,471.4 1082.7,472.4 1084.5,473.4 1086.3,474.4 1088.0,475.4 1089.8,476.4 1091.6,477.4 1093.4,478.4 1095.2,479.4 1096.9,480.4 1098.7,481.4 1100.5,482.4 1102.3,483.4 1104.0,484.4 1105.8,485.4 1107.6,486.4 1109.4,487.4 1111.2,488.4 1112.9,489.4 1114.7,490.4 1116.5,491.4 1118.3,492.4 1120.1,493.4 1121.8,494.4 1123.6,495.4 1125.4,496.3 1127.2,497.3 1128.9,498.3 1130.7,499.3 1132.5,500.3 1134.3,501.3 1136.1,502.3 1137.8,503.3 1139.6,504.3 1141.4,505.3 1143.2,506.3 1144.9,507.3 1146.7,508.3 1148.5,509.3 1150.3,510.3 1152.1,511.3 1153.8,512.3 1155.6,513.3 1157.4,514.3 1159.2,515.3 1160.9,516.3 1162.7,517.3 1164.5,518.3"/><g font-family="Liberation Sans" font-size="12" fill="#000"><text x="261" y="203.5" text-anchor="end">4</text><text x="261" y="305.5" text-anchor="end">2</text><text x="261" y="407.5" text-anchor="end">0</text><text x="261" y="508.5" text-anchor="end">-2</text><text x="261" y="610.5" text-anchor="end">-4</text><text x="261" y="712.5" text-anchor="end">-6</text><text x="274.5" y="732" text-anchor="middle">0</text><text x="452.5" y="732" text-anchor="middle">0.2</text><text x="630.5" y="732" text-anchor="middle">0.4</text><text x="807.5" y="732" text-anchor="middle">0.6</text><text x="985.5" y="732" text-anchor="middle">0.8</text><text x="1163.5" y="732" text-anchor="middle">1</text></g><text x="718.5" y="750" text-anchor="middle" font-family="Liberation Sans" font-size="15.5">time (s)</text></svg>
<div class="a" style="left:277px;top:172px;width:30px;height:1px;background:#ff0000;"></div>
<div class="t" style="left:312px;top:168px;font-size:11px;letter-spacing:-0.27px;">BouncingBall.Root.BouncingBall.h</div>
<div class="a" style="left:482px;top:172px;width:30px;height:1px;background:#0000ff;"></div>
<div class="t" style="left:517px;top:168px;font-size:11px;letter-spacing:-0.27px;">BouncingBall.Root.BouncingBall.v</div>

<!-- ============ VARIABLES DOCK ============ -->
<div class="dockt" style="left:1182px;top:88px;width:294px;height:19px;"></div>
<div class="t" style="left:1187px;top:93px;font-size:12px;letter-spacing:-0.3px;">Variables</div>
<svg class="i" style="left:1439px;top:94px" width="32" height="10"><g fill="none" stroke="#1a1a1a" stroke-width="1.3">
<rect x="0.6" y="3.1" width="5" height="4.6"/><path d="M2.6 3.1V0.1H7.9V4.9H5.6"/></g>
<g stroke="#1a1a1a" stroke-width="1.6"><line x1="21" y1="0.8" x2="28.2" y2="8"/><line x1="28.2" y1="0.8" x2="21" y2="8"/></g></svg>
<div class="inp" style="left:1182px;top:111px;width:225px;height:18px;"></div>
<div class="t ph" style="left:1184px;top:116px;font-size:11px;letter-spacing:-0.22px;">Filter Variables</div>
<svg class="i" style="left:0;top:0" width="1478" height="997"><g transform="translate(1241 0)">
<path d="M171.5 113.2H175.3V118.8H177.7L173.4 126.2L169.1 118.8H171.5Z" fill="url(#ggold)" stroke="#d98e00" stroke-width="0.7"/><rect x="177.5" y="113.3" width="7.3" height="1.8" rx="0.5" fill="#1c3fae"/><rect x="180.0" y="116.4" width="4.8" height="1.4" fill="#5a86d0"/><rect x="180.0" y="119.4" width="4.8" height="1.4" fill="#5a86d0"/><rect x="180.0" y="122.4" width="4.8" height="1.4" fill="#5a86d0"/><rect x="177.5" y="125.2" width="7.3" height="1.8" rx="0.5" fill="#1c3fae"/>
<path d="M194.6 126.7V121.7H192L196.7 113.3L201.4 121.7H198.8V126.7Z" fill="url(#ggold)" stroke="#d98e00" stroke-width="0.7"/><rect x="200.5" y="113.3" width="7.3" height="1.8" rx="0.5" fill="#1c3fae"/><rect x="203.0" y="116.4" width="4.8" height="1.4" fill="#5a86d0"/><rect x="203.0" y="119.4" width="4.8" height="1.4" fill="#5a86d0"/><rect x="203.0" y="122.4" width="4.8" height="1.4" fill="#5a86d0"/><rect x="200.5" y="125.2" width="7.3" height="1.8" rx="0.5" fill="#1c3fae"/>
<path d="M219.8 113.8H226.6V118.8H229.3L223 125.9L216.7 118.8H219.8Z" fill="url(#ggold)" stroke="#d98e00" stroke-width="0.7"/>
</g></svg>
<div class="t" style="left:1181px;top:142px;font-size:11px;letter-spacing:-0.25px;">Simulation Time Unit</div>
<div class="a" style="left:1332px;top:138px;width:143px;height:19px;box-sizing:border-box;border:1px solid #d3d3d3;border-bottom-color:#bcbcbc;border-radius:2px;background:#fdfdfd;"></div>
<div class="t" style="left:1335px;top:144px;font-size:11.5px;">s</div>
<svg class="i" style="left:1462px;top:146px" width="10" height="6"><path d="M0.5 0.5L5 5L9.5 0.5" fill="none" stroke="#333" stroke-width="1"/></svg>
<div class="t" style="left:1181px;top:167px;font-size:11px;letter-spacing:-0.17px;">Enabled for BouncingBall_res.mat</div>
<div class="a" style="left:1192px;top:195px;width:284px;height:4px;box-sizing:border-box;background:#e6e6e6;border:1px solid #d2d2d2;"></div>
<div class="a" style="left:1182px;top:187px;width:10px;height:21px;background:#0067c0;"></div>
<svg class="i" style="left:0;top:0" width="1478" height="260">
 <g fill="#3a72c8" stroke="#1f3f88" stroke-width="0.9" stroke-linejoin="miter">
  <rect x="1189.2" y="220.4" width="6.4" height="22.8"/>
  <path d="M1208.6 220.4V243.2L1195.5 231.8Z"/>
  <path d="M1225.3 220.4V243.2L1246.8 231.8Z"/>
  <rect x="1258.3" y="220.4" width="6.4" height="22.8"/>
  <rect x="1270.3" y="220.4" width="6.4" height="22.8"/>
 </g>
</svg>
<div class="vs" style="left:1217px;top:220px;height:23px;"></div>
<div class="vs" style="left:1285px;top:220px;height:23px;"></div>

<div class="t" style="left:1289px;top:227px;font-size:11px;letter-spacing:-0.2px;">Time:</div>
<div class="inp" style="left:1315px;top:220px;width:77px;height:24px;border-color:#7a7a7a;"></div>
<div class="t" style="left:1318px;top:228px;font-size:11px;">0</div>
<div class="vs" style="left:1394px;top:221px;height:22px;"></div>
<div class="t" style="left:1397px;top:227px;font-size:11px;letter-spacing:-0.2px;">Speed:</div>
<div class="a" style="left:1433px;top:220px;width:40px;height:24px;box-sizing:border-box;border:1px solid #d3d3d3;border-bottom-color:#bcbcbc;border-radius:2px;background:#fdfdfd;"></div>
<div class="t" style="left:1437px;top:228px;font-size:11px;">1</div>
<svg class="i" style="left:1461px;top:230px" width="10" height="6"><path d="M0.5 0.5L5 5L9.5 0.5" fill="none" stroke="#333" stroke-width="1"/></svg>
<div class="box" style="left:1182px;top:255px;width:294px;height:710px;"></div>
<div class="vs" style="left:1332px;top:256px;height:22px;background:#e5e5e5;"></div>
<div class="vs" style="left:1402px;top:256px;height:22px;background:#e5e5e5;"></div>
<div class="vs" style="left:1472px;top:256px;height:22px;background:#e5e5e5;"></div>
<svg class="i" style="left:0;top:0" width="1478" height="530">
 <path d="M1255 260.3L1258.6 256.7L1262.2 260.3" fill="none" stroke="#555" stroke-width="1"/>
 <g fill="none" stroke="#222" stroke-width="1.5">
  <path d="M1185.2 286.4L1189.0 290.6L1192.8 286.4"/>
  <path d="M1197.7 306.4L1201.5 310.6L1205.3 306.4"/>
  <path d="M1210.7 326.4L1214.5 330.6L1218.3 326.4"/>
  <path d="M1223.7 346.4L1227.5 350.6L1231.3 346.4"/>
 </g>
 <rect x="1199.2" y="279.2" width="19.7" height="19.3" rx="2.6" fill="#0a52dc"/>
 <g fill="none" stroke="#fff" stroke-width="1.1"><path d="M1201.5 283.5V281.5H1203.5M1214.5 281.5H1216.5V283.5M1201.5 294V296H1203.5M1214.5 296H1216.5V294"/></g>
 <text x="1209" y="291.8" text-anchor="middle" font-family="Liberation Serif" font-weight="bold" font-size="7.6" fill="#fff" letter-spacing="-0.3">MAT</text>
</svg>
<div class="t" style="left:1225px;top:284px;font-size:12px;">BouncingBall</div>
<div class="t" style="left:1212px;top:304px;font-size:12px;">BouncingBall</div>
<div class="a" style="left:1222px;top:319px;width:253px;height:20px;background:#0078d7;"></div>
<svg class="i" style="left:0;top:0" width="1478" height="340"><path d="M1210.7 326.4L1214.5 330.6L1218.3 326.4" fill="none" stroke="#222" stroke-width="1.5"/></svg>
<div class="t" style="left:1225px;top:324px;font-size:12px;color:#fff;">Root</div>
<div class="t" style="left:1238px;top:344px;font-size:12px;">BouncingBall</div>
<div class="t" style="left:1186px;top:263px;font-size:11px;letter-spacing:-0.3px;">Variables</div>
<div class="t" style="left:1336px;top:263px;font-size:11px;letter-spacing:-0.2px;">Value</div>
<div class="t" style="left:1406px;top:263px;font-size:11px;letter-spacing:-0.2px;">Display Unit</div>
<div class="cb" style="left:1251px;top:364px;"></div>
<div class="t" style="left:1270px;top:364px;font-size:12px;">der(h)</div>
<div class="cb" style="left:1251px;top:384px;"></div>
<div class="t" style="left:1270px;top:384px;font-size:12px;">der(v)</div>
<div class="cb" style="left:1251px;top:404px;"></div>
<div class="t" style="left:1270px;top:404px;font-size:12px;">e</div>
<div class="cb" style="left:1251px;top:424px;"></div>
<div class="t" style="left:1270px;top:424px;font-size:12px;">g</div>
<div class="cbk" style="left:1251px;top:444px;"></div>
<svg class="i" style="left:1251px;top:444px" width="13" height="13"><path d="M3.3 6.8L5.4 8.9L9.8 4.3" fill="none" stroke="#fff" stroke-width="1"/></svg>
<div class="t" style="left:1270px;top:444px;font-size:12px;">h</div>
<div class="cb" style="left:1251px;top:464px;"></div>
<div class="t" style="left:1270px;top:464px;font-size:12px;">time</div>
<div class="cbk" style="left:1251px;top:484px;"></div>
<svg class="i" style="left:1251px;top:484px" width="13" height="13"><path d="M3.3 6.8L5.4 8.9L9.8 4.3" fill="none" stroke="#fff" stroke-width="1"/></svg>
<div class="t" style="left:1270px;top:484px;font-size:12px;">v</div>
<div class="cb" style="left:1251px;top:504px;"></div>
<div class="t" style="left:1270px;top:504px;font-size:12px;">v_min</div>

<div class="a" style="left:1183px;top:950px;width:292px;height:14px;background:#f0f0f0;"></div>
<div class="a" style="left:1200px;top:956px;width:193px;height:2px;background:#858585;border-radius:1px;"></div>

<!-- ============ MESSAGES DOCK ============ -->
<div class="dockt" style="left:239px;top:768px;width:939px;height:19px;"></div>
<div class="t" style="left:244px;top:773px;font-size:12px;letter-spacing:-0.4px;">Messages</div>
<svg class="i" style="left:1141px;top:774px" width="32" height="10"><g fill="none" stroke="#1a1a1a" stroke-width="1.3">
<rect x="0.6" y="3.1" width="5" height="4.6"/><path d="M2.6 3.1V0.1H7.9V4.9H5.6"/></g>
<g stroke="#1a1a1a" stroke-width="1.6"><line x1="21" y1="0.8" x2="28.2" y2="8"/><line x1="28.2" y1="0.8" x2="21" y2="8"/></g></svg>
<div class="a" style="left:241px;top:792px;width:236px;height:20px;box-sizing:border-box;background:#f0f0f0;border:1px solid #d9d9d9;border-bottom:none;"></div>
<div class="vs" style="left:273px;top:792px;height:20px;background:#d9d9d9;"></div>
<div class="vs" style="left:356px;top:792px;height:20px;background:#d9d9d9;"></div>
<div class="vs" style="left:425px;top:792px;height:20px;background:#d9d9d9;"></div>
<div class="a" style="left:239px;top:812px;width:939px;height:1px;background:#a9a9a9;"></div>
<div class="a" style="left:478px;top:790px;width:104px;height:23px;box-sizing:border-box;background:#f9f9f9;border:1px solid #dedede;border-bottom:none;"></div>
<div class="t" style="left:251px;top:798px;font-size:11px;">All</div>
<div class="t" style="left:285px;top:798px;font-size:11px;">Notifications</div>
<div class="t" style="left:368px;top:798px;font-size:11px;letter-spacing:-0.25px;">Warnings</div>
<div class="t" style="left:437px;top:798px;font-size:11px;letter-spacing:-0.2px;">Errors</div>
<div class="t" style="left:490px;top:797px;font-size:11px;letter-spacing:-0.45px;">BouncingBall</div>
<div class="a" style="left:554px;top:794px;width:14px;height:14px;box-sizing:border-box;border:1px solid #d4462c;border-radius:3px;background:#e3744f;"></div>
<svg class="i" style="left:554px;top:794px" width="14" height="14"><g stroke="#fff" stroke-width="2.2" stroke-linecap="round"><line x1="4.5" y1="4.5" x2="9.5" y2="9.5"/><line x1="9.5" y1="4.5" x2="4.5" y2="9.5"/></g></svg>

<div class="t" style="left:240px;top:822px;font-size:11px;letter-spacing:-0.22px;">Simulation of BouncingBall finished.</div>
<div class="a" style="left:414px;top:816px;width:647px;height:21px;background:#06b025;border:1px solid #bcbcbc;box-sizing:border-box;"></div>
<div class="t" style="left:724px;top:822px;font-size:11px;color:#fff;letter-spacing:-0.3px;">100%</div>
<div class="a" style="left:1086px;top:817px;width:88px;height:20px;box-sizing:border-box;border:1px solid #e5e5e5;border-radius:4px;background:#f5f5f5;"></div>
<div class="t" style="left:1089px;top:822px;font-size:11px;color:#787878;letter-spacing:-0.4px;">Cancel Simulation</div>
<div class="box" style="left:241px;top:844px;width:935px;height:120px;border-color:#7f7f7f;"></div>
<div class="a" style="left:1159px;top:845px;width:16px;height:118px;background:#f0f0f0;"></div>
<div class="a" style="left:1166px;top:907px;width:2px;height:39px;background:#858585;border-radius:1px;"></div>
<div class="t mono" style="left:246px;top:846px;line-height:14px;">BouncingBall.ssp" at line: 10 column: 17, fatal error during schema scan<br>warning: "SystemStructureDescription" does not conform to the SSP standard schema<br>server:  PUB socket connected to tcp://127.0.0.1:65396<br>info:    Result file: BouncingBall_res.mat (bufferSize=10)<br>info:    4 warnings<br>info:    0 errors<br><span style="color:#0000ff">Simulation process finished successfully.</span></div>

<!-- ============ STATUS BAR ============ -->
<div class="vs" style="left:1103px;top:968px;height:24px;background:#d0d0d0;"></div>
<div class="a" style="left:1110px;top:969px;width:346px;height:22px;box-sizing:border-box;background:#f0f0f0;border:1px solid #d6d6d6;border-top-color:#a8a8a8;"></div>
<div class="vs" style="left:1195px;top:970px;height:20px;background:#dadada;"></div>
<div class="a" style="left:1279px;top:968px;width:84px;height:24px;box-sizing:border-box;background:#f9f9f9;border:1px solid #e3e3e3;border-bottom:none;"></div>
<div class="vs" style="left:1457px;top:970px;height:22px;background:#d0d0d0;"></div>
<div class="t" style="left:1140px;top:976px;font-size:11px;letter-spacing:-0.45px;">Welcome</div>
<div class="t" style="left:1226px;top:976px;font-size:11px;letter-spacing:-0.3px;">Modeling</div>
<div class="t" style="left:1312px;top:977px;font-size:11px;">Plotting</div>
<div class="t" style="left:1392px;top:976px;font-size:11px;letter-spacing:-0.25px;">Debugging</div>
<svg class="i" style="left:0;top:0" width="1478" height="997">
 <!-- welcome icon: dark gear -->
 <ellipse cx="1132.2" cy="984.5" rx="4.4" ry="2.6" fill="#4a4a4a" stroke="#333" stroke-width="0.6"/>
 <path d="M1128.8 975.6L1134.6 972.2" stroke="#3c3c3c" stroke-width="2.2" stroke-linecap="round"/>
 <ellipse cx="1125" cy="978.6" rx="5.2" ry="7.2" fill="#5a5a5a" stroke="#3a3a3a" stroke-width="1.3" stroke-dasharray="1.2 0.8"/>
 <ellipse cx="1125" cy="978.6" rx="3" ry="4.6" fill="#666"/>
 <rect x="1123.5" y="973.2" width="2.2" height="1.2" fill="#d8d8d8"/>
 <rect x="1123.2" y="976.6" width="2.4" height="1.2" fill="#e0e0e0"/>
 <!-- modeling icon gears -->
<path d="M1220.23 981.84 L1220.06 982.40 L1221.16 982.90 L1219.98 984.64 L1219.05 983.87 L1218.64 984.18 L1218.13 984.47 L1218.55 985.60 L1216.49 986.00 L1216.37 984.79 L1215.86 984.73 L1215.30 984.56 L1214.80 985.66 L1213.06 984.48 L1213.83 983.55 L1213.52 983.14 L1213.23 982.63 L1212.10 983.05 L1211.70 980.99 L1212.91 980.87 L1212.97 980.36 L1213.14 979.80 L1212.04 979.30 L1213.22 977.56 L1214.15 978.33 L1214.56 978.02 L1215.07 977.73 L1214.65 976.60 L1216.71 976.20 L1216.83 977.41 L1217.34 977.47 L1217.90 977.64 L1218.40 976.54 L1220.14 977.72 L1219.37 978.65 L1219.68 979.06 L1219.97 979.57 L1221.10 979.15 L1221.50 981.21 L1220.29 981.33Z" fill="#1440c8"/>
<circle cx="1216.60" cy="981.10" r="2.50" fill="#9fb6f0"/>
<circle cx="1216.60" cy="981.10" r="1.50" fill="#f4f6fb"/>
<path d="M1212.60 983.40 L1212.57 983.81 L1213.35 984.00 L1212.79 985.34 L1212.07 984.97 L1211.84 985.24 L1211.52 985.51 L1211.94 986.19 L1210.60 986.75 L1210.36 985.98 L1210.00 986.00 L1209.59 985.97 L1209.40 986.75 L1208.06 986.19 L1208.43 985.47 L1208.16 985.24 L1207.89 984.92 L1207.21 985.34 L1206.65 984.00 L1207.42 983.76 L1207.40 983.40 L1207.43 982.99 L1206.65 982.80 L1207.21 981.46 L1207.93 981.83 L1208.16 981.56 L1208.48 981.29 L1208.06 980.61 L1209.40 980.05 L1209.64 980.82 L1210.00 980.80 L1210.41 980.83 L1210.60 980.05 L1211.94 980.61 L1211.57 981.33 L1211.84 981.56 L1212.11 981.88 L1212.79 981.46 L1213.35 982.80 L1212.58 983.04Z M1211.10 983.40 A1.1 1.1 0 1 0 1208.90 983.40 A1.1 1.1 0 1 0 1211.10 983.40Z" fill="#1f55d6" fill-rule="evenodd"/>
<circle cx="1218.10" cy="974.40" r="1.70" fill="none" stroke="#7d92cf" stroke-width="1.30"/>
<circle cx="1220.80" cy="985.60" r="1.40" fill="none" stroke="#1c3fb8" stroke-width="1.20"/>
<!-- plotting icon -->
 <rect x="1293.2" y="972.4" width="14.8" height="14.6" rx="2.5" fill="#1e6fd9"/>
 <rect x="1294.5" y="977" width="12.2" height="5" fill="#3f8ae8"/>
 <rect x="1294.5" y="983" width="12.2" height="2.5" fill="#0f4fb0"/>
 <g stroke="#b8d4ff" stroke-width="0.6"><path d="M1295 979.5H1306M1295 981H1306"/></g>
 <!-- ladybug -->
 <g fill="#fff" stroke="#777" stroke-width="0.7"><rect x="1372.5" y="972.6" width="5.5" height="3.4" transform="rotate(40 1375 974.3)"/><rect x="1383.6" y="983.4" width="5.5" height="3.4" transform="rotate(40 1386.3 985.1)"/></g>
 
 <circle cx="1379.5" cy="980" r="6" fill="#d81818" stroke="#5a0000" stroke-width="0.6"/>
 <circle cx="1385" cy="974.5" r="2.6" fill="#111"/>
 <path d="M1386.5 973L1389 971" stroke="#111" stroke-width="0.8"/>
 <g fill="#111"><circle cx="1377" cy="977.5" r="1"/><circle cx="1380.5" cy="979" r="1"/><circle cx="1377.5" cy="982" r="1"/><circle cx="1381.5" cy="983" r="1"/><circle cx="1383" cy="978" r="0.9"/></g>
 <!-- grip -->
 <g fill="#b0b0b0"><rect x="1471" y="986" width="2" height="2"/><rect x="1468" y="989" width="2" height="2"/><rect x="1471" y="989" width="2" height="2"/><rect x="1465" y="992" width="2" height="2"/><rect x="1468" y="992" width="2" height="2"/><rect x="1471" y="992" width="2" height="2"/></g>
</svg>

</body></html>
